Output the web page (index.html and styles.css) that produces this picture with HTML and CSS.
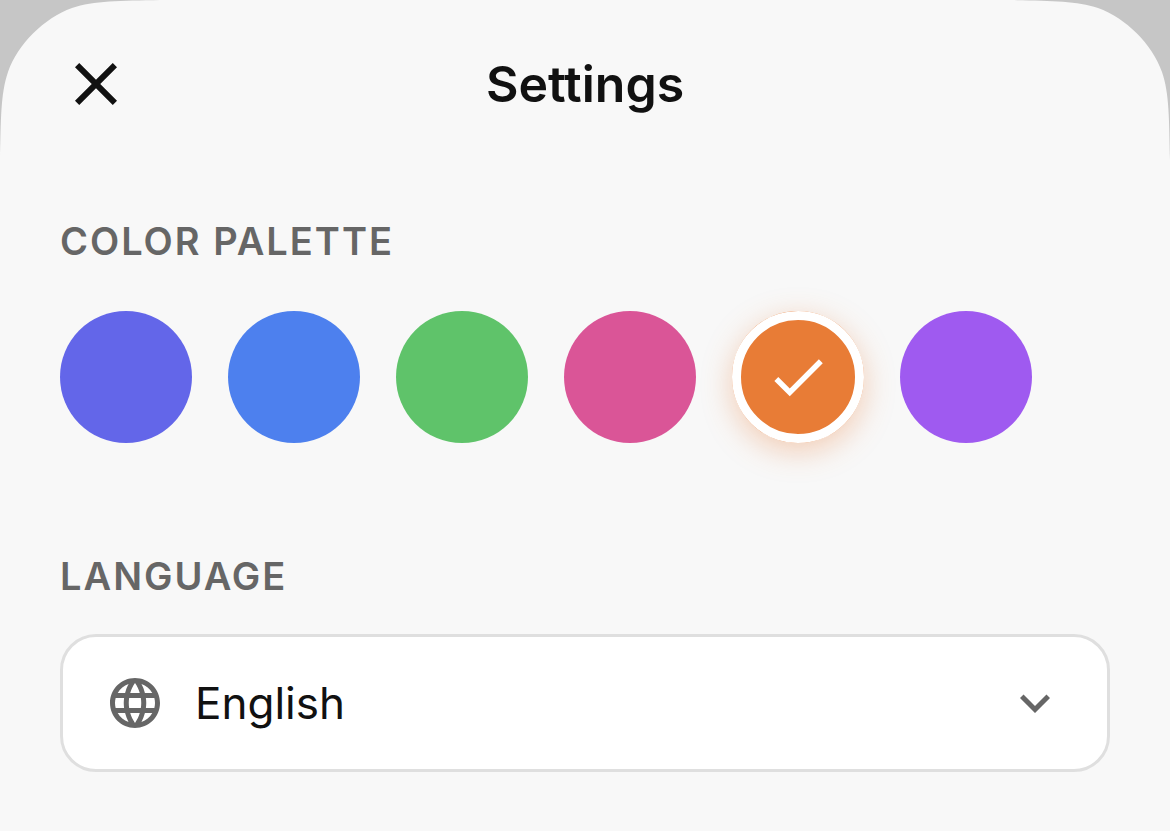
FILE: index.html
```html
<!DOCTYPE html>
<html lang="en">
<head>
    <meta charset="UTF-8">
    <meta name="viewport" content="width=device-width, initial-scale=1.0">
    <title>Settings</title>
    <link rel="stylesheet" href="styles.css">
</head>
<body>
    <main class="sheet">
        <svg class="corner corner-left" viewBox="0 0 160 160" aria-hidden="true"><path d="M0 0H160C120 1 94 0.500 72 8C44 18 18 44 8 72C0.500 94 1 120 0 160Z"/></svg>
        <svg class="corner corner-right" viewBox="0 0 160 160" aria-hidden="true"><path d="M0 0H160C120 1 94 0.500 72 8C44 18 18 44 8 72C0.500 94 1 120 0 160Z"/></svg>

        <header class="header">
            <button class="close-button" type="button" aria-label="Close">
                <svg viewBox="0 0 24 24"><path d="M19 6.410L17.590 5 12 10.590 6.410 5 5 6.410 10.590 12 5 17.590 6.410 19 12 13.410 17.590 19 19 17.590 13.410 12z"/></svg>
            </button>
            <h1 class="title">Settings</h1>
        </header>

        <div class="content">
            <section>
                <h2 class="section-title">COLOR PALETTE</h2>
                <div class="palette">
                    <label class="swatch indigo"><input type="radio" name="color" value="indigo" aria-label="Indigo"></label>
                    <label class="swatch blue"><input type="radio" name="color" value="blue" aria-label="Blue"></label>
                    <label class="swatch green"><input type="radio" name="color" value="green" aria-label="Green"></label>
                    <label class="swatch pink"><input type="radio" name="color" value="pink" aria-label="Pink"></label>
                    <label class="swatch orange">
                        <input type="radio" name="color" value="orange" aria-label="Orange" checked>
                        <svg class="check" viewBox="0 0 24 24"><path d="M9 16.170L4.830 12l-1.420 1.410L9 19 21 7l-1.410-1.410z"/></svg>
                    </label>
                    <label class="swatch purple"><input type="radio" name="color" value="purple" aria-label="Purple"></label>
                </div>
            </section>

            <section>
                <h2 class="section-title"><label for="language">LANGUAGE</label></h2>
                <div class="select-box">
                    <svg class="icon globe" viewBox="0 0 24 24"><path d="M11.990 2C6.470 2 2 6.480 2 12s4.470 10 9.990 10C17.520 22 22 17.520 22 12S17.520 2 11.990 2zm6.930 6h-2.950c-.32-1.250-.78-2.450-1.380-3.560 1.840.63 3.370 1.910 4.330 3.560zM12 4.040c.83 1.200 1.480 2.530 1.910 3.960h-3.820c.43-1.430 1.080-2.760 1.910-3.960zM4.260 14C4.100 13.360 4 12.690 4 12s.1-1.360.26-2h3.380c-.08.66-.14 1.320-.14 2s.06 1.340.14 2H4.260zm.82 2h2.950c.32 1.250.78 2.450 1.380 3.560-1.840-.63-3.370-1.900-4.330-3.560zm2.950-8H5.080c.96-1.660 2.490-2.930 4.330-3.560C8.810 5.550 8.350 6.750 8.030 8zM12 19.960c-.83-1.200-1.480-2.530-1.910-3.960h3.820c-.43 1.430-1.080 2.760-1.910 3.960zM14.340 14H9.660c-.09-.66-.16-1.320-.16-2s.07-1.350.16-2h4.680c.09.65.16 1.320.16 2s-.07 1.340-.16 2zm.25 5.560c.6-1.110 1.060-2.310 1.380-3.560h2.950c-.96 1.650-2.490 2.930-4.330 3.560zM16.360 14c.08-.66.14-1.320.14-2s-.06-1.340-.14-2h3.380c.16.64.26 1.310.26 2s-.1 1.360-.26 2h-3.380z"/></svg>
                    <select id="language">
                        <option selected>English</option>
                    </select>
                    <svg class="icon chevron" viewBox="0 0 24 24"><path d="M7.410 8.590L12 13.170l4.590-4.580L18 10l-6 6-6-6z"/></svg>
                </div>
            </section>
        </div>
    </main>
</body>
</html>
```
FILE: styles.css
```css
* {
    margin: 0;
    padding: 0;
    box-sizing: border-box;
}

body {
    background: #f8f8f8;
    color: #111;
    font-family: Inter, "Liberation Sans", sans-serif;
}

.sheet {
    position: relative;
    min-height: 100vh;
}

/* grey backdrop showing past the rounded top of the sheet */
.corner {
    position: absolute;
    top: 0;
    width: 160px;
    height: 160px;
    fill: #c6c6c6;
    pointer-events: none;
}

.corner-left {
    left: 0;
}

.corner-right {
    right: 0;
    transform: scaleX(-1);
}

.header {
    display: grid;
    grid-template-columns: 1fr auto 1fr;
    align-items: center;
    padding: 48px 60px;
}

.close-button {
    width: 72px;
    height: 72px;
    border: none;
    background: none;
    cursor: pointer;
    fill: #111;
}

.close-button svg {
    display: block;
}

.title {
    font-size: 50px;
    line-height: 72px;
    font-weight: 600;
}

.content {
    display: flex;
    flex-direction: column;
    gap: 97px;
    padding: 49px 60px;
}

.section-title {
    margin-bottom: 34px;
    font-size: 38px;
    line-height: 48px;
    font-weight: 600;
    letter-spacing: 2px;
    color: #666;
}

.palette {
    display: flex;
    flex-wrap: wrap;
    gap: 36px;
    padding: 12px 0;
}

.swatch {
    display: grid;
    place-items: center;
    width: 132px;
    height: 132px;
    border-radius: 50%;
    cursor: pointer;
}

.swatch input {
    grid-area: 1 / 1;
    width: 132px;
    height: 132px;
    border-radius: 50%;
    appearance: none;
    cursor: pointer;
}

.swatch input:checked {
    border: 9px solid #fff;
}

.indigo { background: #6366e9; }
.blue { background: #4d80ee; }
.green { background: #5fc36a; }
.pink { background: #da5597; }
.orange { background: #e87c36; box-shadow: 0 8px 30px rgba(232, 124, 54, 0.35); }
.purple { background: #9f5af0; }

.check {
    grid-area: 1 / 1;
    width: 66px;
    height: 66px;
    fill: #fff;
    pointer-events: none;
}

.select-box {
    display: grid;
    grid-template-columns: 60px 1fr 60px;
    column-gap: 30px;
    align-items: center;
    padding: 0 42px;
    border: 3px solid #dfdfdf;
    border-radius: 36px;
    background: #fff;
}

.icon {
    grid-row: 1;
    width: 60px;
    height: 60px;
    fill: #666;
    pointer-events: none;
}

.globe {
    grid-column: 1;
}

.chevron {
    grid-column: 3;
}

.select-box select {
    grid-row: 1;
    grid-column: 2 / 4;
    height: 132px;
    border: none;
    background: none;
    appearance: none;
    font-family: inherit;
    font-size: 44px;
    color: #111;
    cursor: pointer;
}
```
